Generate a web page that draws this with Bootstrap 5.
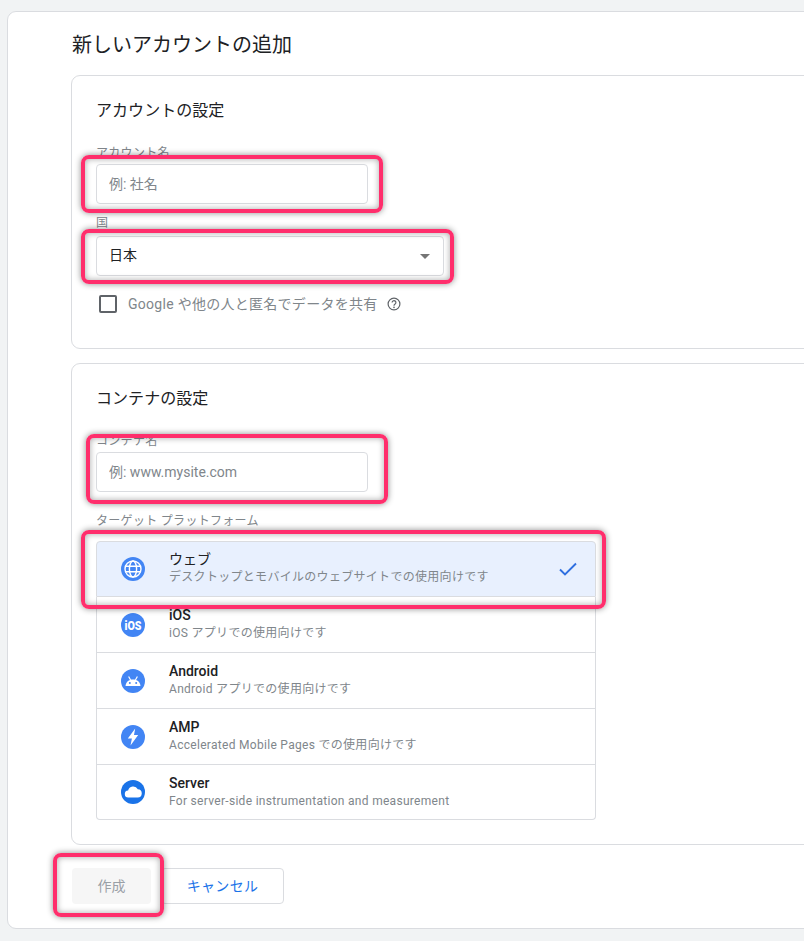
<!DOCTYPE html>
<html lang="ja">
<head>
<meta charset="utf-8">
<title>新しいアカウントの追加</title>
<link rel="stylesheet" href="https://cdn.jsdelivr.net/npm/bootstrap@5.3.0/dist/css/bootstrap.min.css">
<style>
html,body{height:941px;overflow:hidden}
body{background:#f1f3f4;font-family:Roboto,"Noto Sans CJK JP",sans-serif;color:#202124;padding:11px 0 0 7px}
.shell{width:900px;height:918px;background:#fff;border:1px solid #dadce0;border-radius:9px;padding:0 0 0 63px}
.page-title{font-size:20px;font-weight:400;line-height:28px;margin:19px 0 16px 1px;color:#202124}
.sect{width:780px;border:1px solid #dadce0;border-radius:9px;padding:0 24px;box-shadow:none}
.sect-a{height:274px}
.sect-b{height:482px;margin-top:14px}
.sect-title{font-size:16px;font-weight:400;line-height:24px;margin:0;padding-top:23px;color:#202124;letter-spacing:.05px}
.fld-label{font-size:12px;line-height:14px;color:#80868b;display:block;margin:0;letter-spacing:.3px}
.lb-acc{margin-top:23px}
.lb-country{margin-top:12px}
.lb-con{margin-top:23px}
.lb-target{margin-top:22px}
.gap-acc{margin-top:4px}
.gap-country{margin-top:6px}
.gap-con{margin-top:4px}
.gap-plat{margin-top:13px}
.fld{position:relative}
.fld-input{height:40px;width:272px;border:1px solid #dadce0;border-radius:4px;font-size:14px;padding:0 12px;color:#202124;font-family:inherit}
.fld-input::placeholder{color:#80868b;opacity:1}
.fld-select{width:348px;display:flex;align-items:center;justify-content:space-between;background:#fff;padding-right:13px;padding-bottom:2px}
.caret{width:0;height:0;margin-top:2px;border-left:5.5px solid transparent;border-right:5.5px solid transparent;border-top:5.5px solid #757575}
.mark-box{position:absolute;border:4px solid #ff2e6c;border-radius:8px;box-shadow:0 0 6px rgba(0,0,0,.45),inset 0 0 6px rgba(0,0,0,.35);pointer-events:none;z-index:5}
.mk1{left:-15px;top:-9px;width:302px;height:58px}
.mk2{left:-15px;top:-7px;width:373px;height:55px}
.mk3{left:-10px;top:-18px;width:302px;height:70px}
.mk4{left:-15px;top:-11px;width:525px;height:79px}
.mk5{left:-19px;top:-15px;width:111px;height:64px}
.share{display:flex;align-items:center;margin-top:19px;padding-left:3px;height:18px;font-size:14px;color:#80868b;letter-spacing:.28px}
.tick{width:18px;height:18px;border:2px solid #5f6368;border-radius:2px;margin-right:11px;flex:none}
.help{margin-left:9px;flex:none}
.plat{width:500px;border-color:#dadce0;border-radius:4px;position:relative}
.plat .list-group-item{height:56px;display:flex;align-items:center;padding:0 0 0 24px;border-color:#dadce0;color:#202124}
.plat .list-group-item:last-child{height:55px}
.plat .list-group-item.on{background:#e8f0fe}
.plat-ico{flex:none;width:24px;height:24px;margin-right:24px}
.plat-body{flex:1;min-width:0;padding-bottom:1px}
.on .plat-body{padding-bottom:3px}
.plat-name{font-size:14px;font-weight:500;line-height:18px}
.on .plat-name{font-weight:400}
.plat-desc{font-size:12px;line-height:18px;color:#80868b;letter-spacing:.3px}
.plat-check{margin-right:17px;flex:none}
.acts{display:flex;align-items:center;margin:23px 0 0 1px;position:relative}
.btn-make,.btn-make:disabled{width:79px;height:36px;background:#f6f6f6;border:0;color:#9aa0a6;font-size:14px;border-radius:4px;opacity:1}
.btn-stop{width:123px;height:36px;margin-left:10px;background:#fff;border:1px solid #dadce0;color:#1a73e8;font-size:14px;font-weight:400;border-radius:4px;padding:0;letter-spacing:.3px}
</style>
</head>
<body>
<main class="shell">
  <h1 class="page-title">新しいアカウントの追加</h1>

  <section class="card sect sect-a">
    <h2 class="sect-title">アカウントの設定</h2>
    <label class="fld-label lb-acc" for="acc">アカウント名</label>
    <div class="fld gap-acc">
      <input id="acc" class="form-control fld-input" placeholder="例: 社名">
      <div class="mark-box mk1"></div>
    </div>
    <label class="fld-label lb-country">国</label>
    <div class="fld gap-country">
      <div class="form-control fld-input fld-select"><span>日本</span><span class="caret"></span></div>
      <div class="mark-box mk2"></div>
    </div>
    <div class="share">
      <span class="tick"></span>
      <span>Google や他の人と匿名でデータを共有</span>
      <svg class="help" width="14" height="14" viewBox="0 0 14 14"><circle cx="7" cy="7" r="5.9" fill="none" stroke="#5f6368" stroke-width="1.2"/><path d="M5.1 5.6a1.9 1.9 0 1 1 3 1.5c-.7.5-1.1.8-1.1 1.6" fill="none" stroke="#5f6368" stroke-width="1.2"/><circle cx="7" cy="10.4" r=".8" fill="#5f6368"/></svg>
    </div>
  </section>

  <section class="card sect sect-b">
    <h2 class="sect-title">コンテナの設定</h2>
    <label class="fld-label lb-con" for="con">コンテナ名</label>
    <div class="fld gap-con">
      <input id="con" class="form-control fld-input" placeholder="例: www.mysite.com">
      <div class="mark-box mk3"></div>
    </div>
    <label class="fld-label lb-target">ターゲット プラットフォーム</label>
    <div class="fld gap-plat">
      <div class="list-group plat">
        <div class="list-group-item on">
          <svg class="plat-ico" viewBox="0 0 24 24"><circle cx="12" cy="12" r="12" fill="#4285f4"/><g fill="none" stroke="#fff" stroke-width="1.4"><circle cx="12" cy="12" r="8"/><ellipse cx="12" cy="12" rx="3.600" ry="8"/><path d="M4.500 9.300h15M4.500 14.700h15"/></g></svg>
          <div class="plat-body"><div class="plat-name">ウェブ</div><div class="plat-desc">デスクトップとモバイルのウェブサイトでの使用向けです</div></div>
          <svg class="plat-check" width="20" height="16" viewBox="0 0 20 16"><path d="M2 8.500l5 5L18 2.500" fill="none" stroke="#2f6fe0" stroke-width="1.9"/></svg>
        </div>
        <div class="list-group-item">
          <svg class="plat-ico" viewBox="0 0 24 24"><circle cx="12" cy="12" r="12" fill="#4285f4"/><text x="12" y="16.800" text-anchor="middle" fill="#fff" font-family="Roboto,sans-serif" font-weight="900" font-size="13.500" textLength="17" lengthAdjust="spacingAndGlyphs">iOS</text></svg>
          <div class="plat-body"><div class="plat-name">iOS</div><div class="plat-desc">iOS アプリでの使用向けです</div></div>
        </div>
        <div class="list-group-item">
          <svg class="plat-ico" viewBox="0 0 24 24"><circle cx="12" cy="12" r="12" fill="#4285f4"/><path d="M4.500 17c.2-4 3.200-6.600 7.500-6.600s7.300 2.600 7.500 6.600z" fill="#fff"/><path d="M7.600 7.500l2 3.500M16.400 7.500l-2 3.500" stroke="#fff" stroke-width="1.200"/><circle cx="8.800" cy="14" r="1" fill="#4285f4"/><circle cx="15.200" cy="14" r="1" fill="#4285f4"/></svg>
          <div class="plat-body"><div class="plat-name">Android</div><div class="plat-desc">Android アプリでの使用向けです</div></div>
        </div>
        <div class="list-group-item">
          <svg class="plat-ico" viewBox="0 0 24 24"><circle cx="12" cy="12" r="12" fill="#4285f4"/><path d="M14.200 3.600L6.800 13.400h4.100l-1.400 7 7.700-10.300h-4.200z" fill="#fff"/></svg>
          <div class="plat-body"><div class="plat-name">AMP</div><div class="plat-desc">Accelerated Mobile Pages での使用向けです</div></div>
        </div>
        <div class="list-group-item">
          <svg class="plat-ico" viewBox="0 0 24 24"><circle cx="12" cy="12" r="12" fill="#1a73e8"/><path d="M7.500 17.500a3.500 3.500 0 0 1-.4-7A5.200 5.200 0 0 1 16.800 9.300a4.100 4.100 0 0 1-.3 8.200z" fill="#fff"/></svg>
          <div class="plat-body"><div class="plat-name">Server</div><div class="plat-desc">For server-side instrumentation and measurement</div></div>
        </div>
      </div>
      <div class="mark-box mk4"></div>
    </div>
  </section>

  <div class="acts">
    <button class="btn btn-make" disabled>作成</button>
    <button class="btn btn-stop">キャンセル</button>
    <div class="mark-box mk5"></div>
  </div>
</main>
<script src="https://cdn.jsdelivr.net/npm/bootstrap@5.3.0/dist/js/bootstrap.bundle.min.js"></script>
</body>
</html>
